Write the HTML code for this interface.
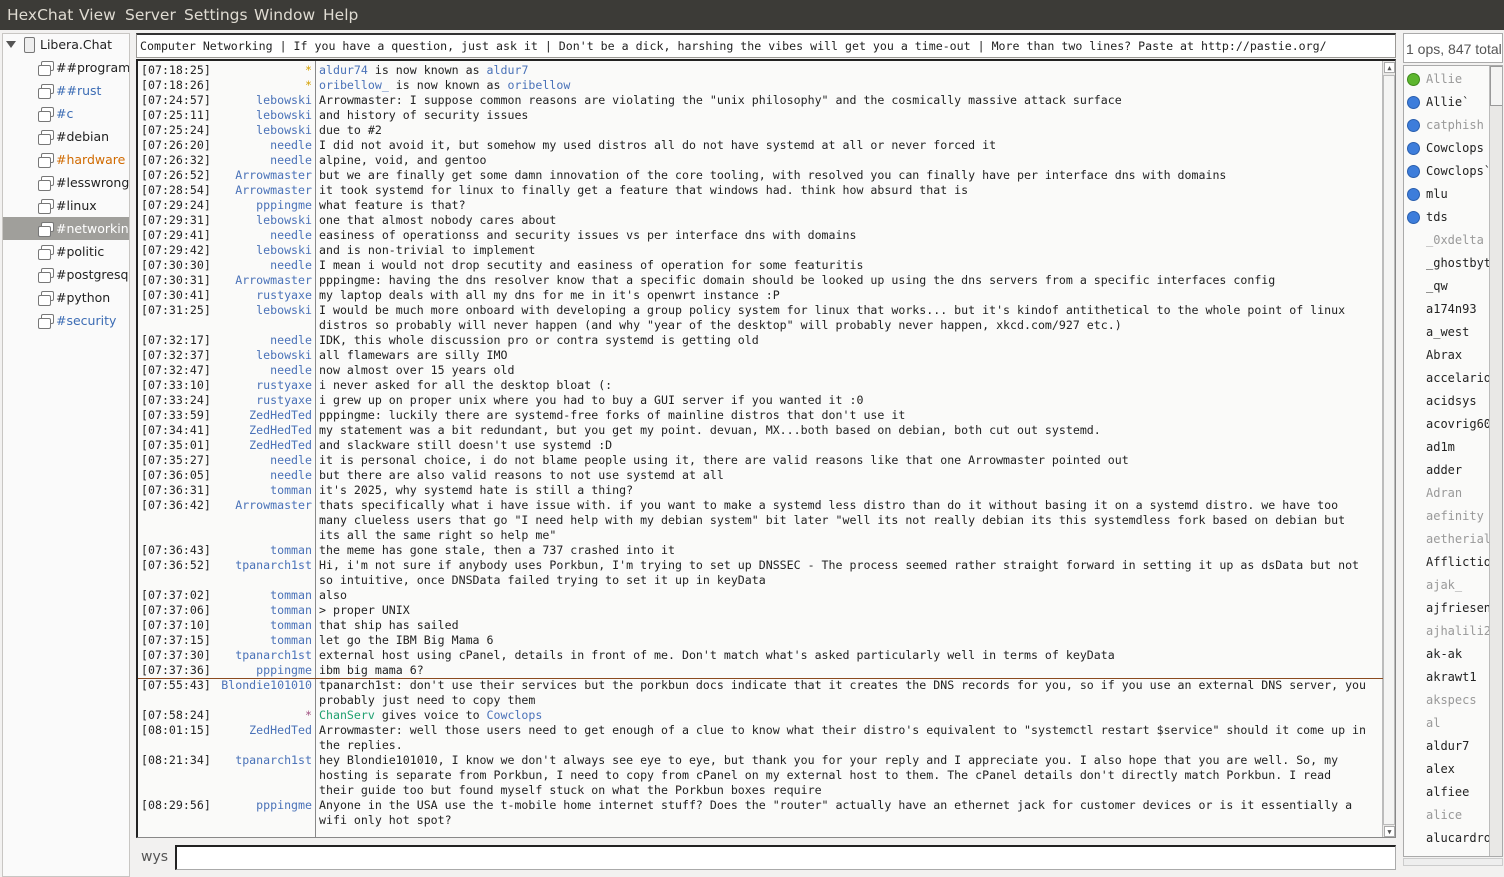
<!DOCTYPE html>
<html><head><meta charset="utf-8"><style>
*{box-sizing:border-box;margin:0;padding:0}
body{width:1504px;height:877px;overflow:hidden;background:#f2f1f0;font-family:"DejaVu Sans","Liberation Sans",sans-serif;position:relative}
.menu{position:absolute;left:0;top:0;width:1504px;height:30px;background:#3c3b37;color:#dfdbd2;font-size:15.5px}
.menu span{position:absolute;top:6px}
.tree{position:absolute;left:2px;top:33px;width:128px;height:844px;background:#fafafa;border:1px solid #c8c6c3;font-size:12.5px;color:#222;overflow:hidden}
.tree .it{position:absolute;height:23px;line-height:23px;white-space:nowrap}
.ic{position:absolute;width:13px;height:10px;border:1.3px solid #777;border-radius:2px;background:#fff}
.ic:before{content:"";position:absolute;left:-4px;top:3px;width:11px;height:9px;border:1.3px solid #777;border-radius:2px;background:#fff}
.topic{position:absolute;left:136px;top:33px;width:1260px;height:25px;background:#fff;border:1px solid #9a9894;border-top:2px solid #333;font:11.6px "DejaVu Sans Mono",monospace;line-height:22px;padding-left:3px;color:#222;white-space:nowrap;overflow:hidden}
.chat{position:absolute;left:136px;top:59px;width:1260px;height:779px;background:#fafaf9;border:1px solid #888;border-left:2px solid #222;border-top:2px solid #222;overflow:hidden;font:11.6px "DejaVu Sans Mono",monospace;color:#222}
.sep{position:absolute;left:177px;top:0;width:1px;height:780px;background:#888}
.l{position:absolute;left:0;height:15px;line-height:15px;white-space:pre}
.ts{position:absolute;left:3px}
.nk{position:absolute;right:1071px;text-align:right;color:#4a72b8}
.tx{position:absolute;left:181px}
.sb{position:absolute;right:0;top:0;width:13px;height:777px;background:#e9e8e6;border-left:1px solid #bbb}
.input{position:absolute;left:175px;top:845px;width:1221px;height:25px;background:#fff;border:1px solid #aaa;border-top:2px solid #222;border-left:2px solid #222}
.ul{position:absolute;left:1403px;top:65px;width:100px;height:792px;background:#fafaf9;border:1px solid #aaa;overflow:hidden;font:12px "DejaVu Sans Mono",monospace}
.u{position:absolute;left:22px;height:23px;line-height:23px;color:#222;white-space:nowrap}
.u.a{color:#999}
.dot{position:absolute;left:3px;top:5px;width:13px;height:13px;border-radius:50%;background:#3d7ddb;border:1px solid #2a5fae}
</style></head><body>
<div class="menu"><span style="left:7px">HexChat</span><span style="left:79px">View</span><span style="left:125px">Server</span><span style="left:184px">Settings</span><span style="left:254px">Window</span><span style="left:323px">Help</span></div>

<div class="tree">
<div style="position:absolute;left:3px;top:7px;width:0;height:0;border-left:5px solid transparent;border-right:5px solid transparent;border-top:7px solid #555"></div>
<div style="position:absolute;left:21px;top:3px;width:11px;height:16px;border:1px solid #777;border-radius:2px;background:#eee"></div>
<div class="it" style="left:37px;top:-1px">Libera.Chat</div>
<div style="position:absolute;left:0;top:183px;width:128px;height:23px;background:#a09f9b"></div>
<div class="ic" style="left:38px;top:27px"></div><div class="it" style="left:53px;top:22px">##programming</div>
<div class="ic" style="left:38px;top:50px"></div><div class="it" style="left:53px;top:45px;color:#3c6cb4">##rust</div>
<div class="ic" style="left:38px;top:73px"></div><div class="it" style="left:53px;top:68px;color:#3c6cb4">#c</div>
<div class="ic" style="left:38px;top:96px"></div><div class="it" style="left:53px;top:91px">#debian</div>
<div class="ic" style="left:38px;top:119px"></div><div class="it" style="left:53px;top:114px;color:#d06a00">#hardware</div>
<div class="ic" style="left:38px;top:142px"></div><div class="it" style="left:53px;top:137px">#lesswrong</div>
<div class="ic" style="left:38px;top:165px"></div><div class="it" style="left:53px;top:160px">#linux</div>
<div class="ic" style="left:38px;top:188px"></div><div class="it" style="left:53px;top:183px;color:#fff">#networking</div>
<div class="ic" style="left:38px;top:211px"></div><div class="it" style="left:53px;top:206px">#politic</div>
<div class="ic" style="left:38px;top:234px"></div><div class="it" style="left:53px;top:229px">#postgresql</div>
<div class="ic" style="left:38px;top:257px"></div><div class="it" style="left:53px;top:252px">#python</div>
<div class="ic" style="left:38px;top:280px"></div><div class="it" style="left:53px;top:275px;color:#3c6cb4">#security</div>
</div>

<div class="topic">Computer Networking | If you have a question, just ask it | Don't be a dick, harshing the vibes will get you a time-out | More than two lines? Paste at http://pastie.org/</div>

<div class="chat">
<div class="sep"></div>
<div class="sb"><div style="position:absolute;left:1px;top:1px;width:11px;height:11px;background:#fff;border:1px solid #aaa;font-size:7px;text-align:center;line-height:10px;color:#555">▲</div><div style="position:absolute;left:1px;bottom:1px;width:11px;height:11px;background:#fff;border:1px solid #aaa;font-size:7px;text-align:center;line-height:10px;color:#555">▼</div><div style="position:absolute;left:0;top:14px;width:12px;height:750px;background:#f4f4f3;border:1px solid #bbb"></div></div>
<div style="position:absolute;left:0;top:617px;width:1245px;height:1px;background:#8a4a20"></div>
<div id="lines"></div>
</div>

<div style="position:absolute;left:141px;top:849px;font-size:14px;color:#555">wys</div>
<div class="input"></div>

<div style="position:absolute;left:1403px;top:33px;width:100px;height:30px;background:#fff;border:1px solid #aaa;font:14px 'Liberation Sans',sans-serif;color:#555;line-height:30px;padding-left:2px;white-space:nowrap;overflow:hidden">1 ops, 847 total</div>
<div class="ul" id="ul"><div style="position:absolute;right:0;top:0;width:13px;height:790px;background:#e9e8e6;border-left:1px solid #bbb"><div style="position:absolute;left:0;top:0;width:13px;height:40px;background:#f4f4f3;border:1px solid #999"></div></div></div>
<div style="position:absolute;left:1403px;top:858px;width:100px;height:8px;border:1px solid #ccc;background:#eee"></div>

<script>
var L=[
["[07:18:25]","*","<span style='color:#4a72b8'>aldur74</span> is now known as <span style='color:#4a72b8'>aldur7</span>",1],
["[07:18:26]","*","<span style='color:#4a72b8'>oribellow_</span> is now known as <span style='color:#4a72b8'>oribellow</span>",1],
["[07:24:57]","lebowski","Arrowmaster: I suppose common reasons are violating the \"unix philosophy\" and the cosmically massive attack surface"],
["[07:25:11]","lebowski","and history of security issues"],
["[07:25:24]","lebowski","due to #2"],
["[07:26:20]","needle","I did not avoid it, but somehow my used distros all do not have systemd at all or never forced it"],
["[07:26:32]","needle","alpine, void, and gentoo"],
["[07:26:52]","Arrowmaster","but we are finally get some damn innovation of the core tooling, with resolved you can finally have per interface dns with domains"],
["[07:28:54]","Arrowmaster","it took systemd for linux to finally get a feature that windows had. think how absurd that is"],
["[07:29:24]","pppingme","what feature is that?"],
["[07:29:31]","lebowski","one that almost nobody cares about"],
["[07:29:41]","needle","easiness of operationss and security issues vs per interface dns with domains"],
["[07:29:42]","lebowski","and is non-trivial to implement"],
["[07:30:30]","needle","I mean i would not drop secutity and easiness of operation for some featuritis"],
["[07:30:31]","Arrowmaster","pppingme: having the dns resolver know that a specific domain should be looked up using the dns servers from a specific interfaces config"],
["[07:30:41]","rustyaxe","my laptop deals with all my dns for me in it's openwrt instance :P"],
["[07:31:25]","lebowski","I would be much more onboard with developing a group policy system for linux that works... but it's kindof antithetical to the whole point of linux"],
["","","distros so probably will never happen (and why \"year of the desktop\" will probably never happen, xkcd.com/927 etc.)"],
["[07:32:17]","needle","IDK, this whole discussion pro or contra systemd is getting old"],
["[07:32:37]","lebowski","all flamewars are silly IMO"],
["[07:32:47]","needle","now almost over 15 years old"],
["[07:33:10]","rustyaxe","i never asked for all the desktop bloat (:"],
["[07:33:24]","rustyaxe","i grew up on proper unix where you had to buy a GUI server if you wanted it :0"],
["[07:33:59]","ZedHedTed","pppingme: luckily there are systemd-free forks of mainline distros that don't use it"],
["[07:34:41]","ZedHedTed","my statement was a bit redundant, but you get my point. devuan, MX...both based on debian, both cut out systemd."],
["[07:35:01]","ZedHedTed","and slackware still doesn't use systemd :D"],
["[07:35:27]","needle","it is personal choice, i do not blame people using it, there are valid reasons like that one Arrowmaster pointed out"],
["[07:36:05]","needle","but there are also valid reasons to not use systemd at all"],
["[07:36:31]","tomman","it's 2025, why systemd hate is still a thing?"],
["[07:36:42]","Arrowmaster","thats specifically what i have issue with. if you want to make a systemd less distro than do it without basing it on a systemd distro. we have too"],
["","","many clueless users that go \"I need help with my debian system\" bit later \"well its not really debian its this systemdless fork based on debian but"],
["","","its all the same right so help me\""],
["[07:36:43]","tomman","the meme has gone stale, then a 737 crashed into it"],
["[07:36:52]","tpanarch1st","Hi, i'm not sure if anybody uses Porkbun, I'm trying to set up DNSSEC - The process seemed rather straight forward in setting it up as dsData but not"],
["","","so intuitive, once DNSData failed trying to set it up in keyData"],
["[07:37:02]","tomman","also"],
["[07:37:06]","tomman","&gt; proper UNIX"],
["[07:37:10]","tomman","that ship has sailed"],
["[07:37:15]","tomman","let go the IBM Big Mama 6"],
["[07:37:30]","tpanarch1st","external host using cPanel, details in front of me. Don't match what's asked particularly well in terms of keyData"],
["[07:37:36]","pppingme","ibm big mama 6?"],
["[07:55:43]","Blondie101010","tpanarch1st: don't use their services but the porkbun docs indicate that it creates the DNS records for you, so if you use an external DNS server, you"],
["","","probably just need to copy them"],
["[07:58:24]","*","<span style='color:#20a070'>ChanServ</span> gives voice to <span style='color:#4a72b8'>Cowclops</span>",2],
["[08:01:15]","ZedHedTed","Arrowmaster: well those users need to get enough of a clue to know what their distro's equivalent to \"systemctl restart $service\" should it come up in"],
["","","the replies."],
["[08:21:34]","tpanarch1st","hey Blondie101010, I know we don't always see eye to eye, but thank you for your reply and I appreciate you. I also hope that you are well. So, my"],
["","","hosting is separate from Porkbun, I need to copy from cPanel on my external host to them. The cPanel details don't directly match Porkbun. I read"],
["","","their guide too but found myself stuck on what the Porkbun boxes require"],
["[08:29:56]","pppingme","Anyone in the USA use the t-mobile home internet stuff? Does the \"router\" actually have an ethernet jack for customer devices or is it essentially a"],
["","","wifi only hot spot?"]];
var h="";
L.forEach(function(r,i){var t=2+i*15;var nc=r[3]==1?"color:#d4a000":r[3]==2?"color:#a05080":"";
h+="<div class='l' style='top:"+t+"px;width:1245px'><span class='ts'>"+r[0]+"</span><span class='nk' style='"+nc+"'>"+r[1]+"</span><span class='tx'>"+r[2]+"</span></div>";});
document.getElementById("lines").innerHTML=h;
var U=[["Allie",1,"g"],["Allie`",0,"b"],["catphish",1,"b"],["Cowclops",0,"b"],["Cowclops`",0,"b"],["mlu",0,"b"],["tds",0,"b"],["_0xdelta",1],["_ghostbyte",0],["_qw",0],["a174n93",0],["a_west",0],["Abrax",0],["accelario",0],["acidsys",0],["acovrig60",0],["ad1m",0],["adder",0],["Adran",1],["aefinity",1],["aetherial",1],["Afflictio",0],["ajak_",1],["ajfriesen",0],["ajhalili2",1],["ak-ak",0],["akrawt1",0],["akspecs",1],["al",1],["aldur7",0],["alex",0],["alfiee",0],["alice",1],["alucardro",0],["anon",0]];
var u="";U.forEach(function(r,i){var t=2+i*23;u+="<div class='u"+(r[1]?" a":"")+"' style='top:"+t+"px'>"+r[0]+"</div>";if(r[2])u+="<div class='dot' style='top:"+(t+5)+"px;"+(r[2]=="g"?"background:#5db62e;border-color:#3f8a1c":"")+"'></div>";});
document.getElementById("ul").insertAdjacentHTML("afterbegin",u);
</script>
</body></html>
